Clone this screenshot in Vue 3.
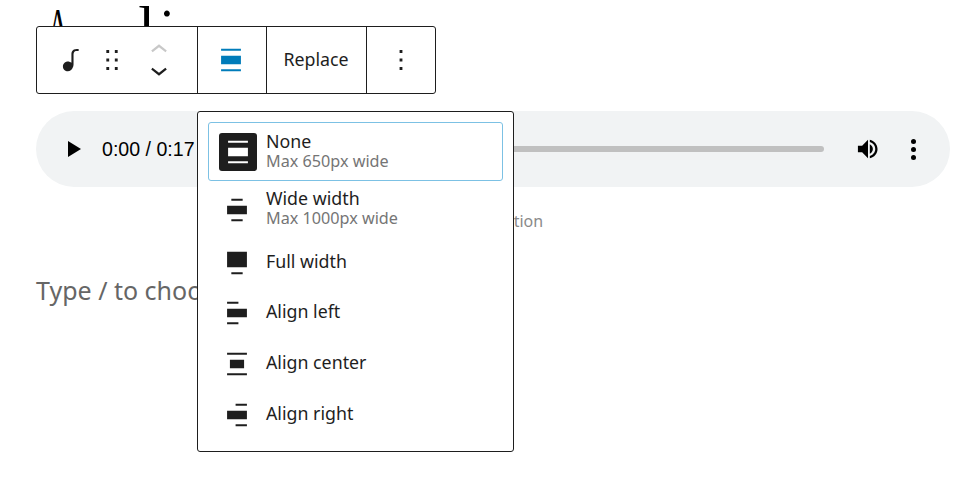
<script setup>
const items = [
  { label: 'None', sub: 'Max 650px wide', cls: 'none', d: 'M19 5.5H5V4h14v1.5ZM19 20H5v-1.5h14V20ZM5 9h14v6H5V9Z', active: true },
  { label: 'Wide width', sub: 'Max 1000px wide', cls: 'wide', d: 'M16 5.5H8V4h8v1.5ZM16 20H8v-1.5h8V20ZM5 9h14v6H5V9Z' },
  { label: 'Full width', cls: 'full', d: 'M5 4h14v11H5V4Zm11 16H8v-1.5h8V20Z' },
  { label: 'Align left', cls: 'std', d: 'M5 5.5h8V4H5v1.5ZM5 20h8v-1.5H5V20ZM19 9H5v6h14V9Z' },
  { label: 'Align center', cls: 'std', d: 'M19 5.5H5V4h14v1.5ZM19 20H5v-1.5h14V20ZM7 9h10v6H7V9Z' },
  { label: 'Align right', cls: 'std', d: 'M19 5.5h-8V4h8v1.5ZM19 20h-8v-1.5h8V20ZM5 9h14v6H5V9Z' },
]
</script>

<template>
  <div class="page">
    <h1 class="title"><span class="t-a">A</span><span class="t-l">l</span><span class="t-c">:</span></h1>
    <div class="player">
      <svg class="play" viewBox="0 0 13 16"><path d="M0 0l13 8-13 8z" /></svg>
      <span class="time">0:00 / 0:17</span>
      <div class="track"></div>
      <svg class="volume" viewBox="0 0 24 24"><path d="M1 8.5v7h4.6L12 22V2L5.600 8.500z" /><path d="M14 6.800c2 1.100 3.300 3 3.300 5.200s-1.300 4.100-3.300 5.200z" /><path d="M14 1.800v2.600c3.400 1 5.900 4 5.900 7.600s-2.500 6.600-5.900 7.600v2.600c4.800-1.100 8.400-5.200 8.400-10.200S18.800 2.900 14 1.800z" /></svg>
      <div class="dots"><i></i><i></i><i></i></div>
    </div>
    <p class="caption">Write caption</p>
    <p class="placeholder">Type / to choose a block</p>

    <div class="toolbar">
      <div class="group first">
        <svg class="icon note" viewBox="0 0 24 24"><path d="M17.700 4.300c-1.200 0-2.800 0-3.800 1-.6.6-.9 1.500-.9 2.600V14c-.6-.6-1.500-1-2.500-1C8.600 13 7 14.600 7 16.500S8.600 20 10.500 20c1.500 0 2.800-1 3.300-2.300.5-.8.700-1.600.7-2.500V7.900c0-.7.200-1.200.5-1.600.6-.6 1.800-.6 2.800-.6h.3V4.300h-.4z" /></svg>
        <svg class="icon drag" viewBox="0 0 24 24"><path d="M8 7h2V5H8v2zm0 6h2v-2H8v2zm0 6h2v-2H8v2zm6-14v2h2V5h-2zm0 8h2v-2h-2v2zm0 6h2v-2h-2v2z" /></svg>
        <div class="movers">
          <svg class="chev up" viewBox="0 0 24 24"><path d="M6.500 12.400L12 8l5.500 4.400-.9 1.200L12 10l-4.500 3.600-1-1.200z" /></svg>
          <svg class="chev" viewBox="0 0 24 24"><path d="M17.500 11.600L12 16l-5.500-4.400.9-1.200L12 14l4.500-3.600 1 1.200z" /></svg>
        </div>
      </div>
      <div class="group align">
        <svg class="icon blue" viewBox="0 0 24 24"><path d="M19 5.500H5V4h14v1.500ZM19 20H5v-1.500h14V20ZM5 9h14v6H5V9Z" /></svg>
      </div>
      <div class="group replace"><span>Replace</span></div>
      <div class="group more">
        <svg class="icon" viewBox="0 0 24 24"><path d="M13 19h-2v-2h2v2zm0-6h-2v-2h2v2zm0-6h-2V5h2v2z" /></svg>
      </div>
    </div>

    <div class="popover">
      <div v-for="item in items" :key="item.label" class="row" :class="[item.cls, { active: item.active }]">
        <span class="icon-box">
          <svg class="icon" viewBox="0 0 24 24"><path :d="item.d" /></svg>
        </span>
        <span class="text">
          <span class="label">{{ item.label }}</span>
          <span v-if="item.sub" class="sub">{{ item.sub }}</span>
        </span>
      </div>
    </div>
  </div>
</template>

<style>
html, body { margin: 0; background: #fff; }
</style>

<style scoped>
.page {
  position: relative;
  width: 980px;
  height: 490px;
  overflow: hidden;
  box-sizing: border-box;
  padding: 0 30px 0 36px;
  background: #fff;
  font-family: "Noto Sans", sans-serif;
  color: #1e1e1e;
}
.title {
  display: flex;
  align-items: flex-start;
  margin: 0;
  height: 111px;
  font-family: "Liberation Serif", serif;
  font-weight: 400;
  line-height: 1;
  color: #000;
}
.t-a { display: inline-block; margin: 1px 0 0 3px; font-size: 53px; transform: scaleX(.55); }
.t-l { margin: -3px 0 0 61px; font-size: 60px; }
.t-c { margin: -8px 0 0 5px; font-size: 50px; }
.player {
  display: flex;
  align-items: center;
  height: 76px;
  padding: 0 34px 0 32px;
  border-radius: 38px;
  background: #f1f3f4;
  color: #000;
}
.play { width: 13px; height: 16px; fill: #000; }
.time { margin-left: 21px; font: 19.6px "Liberation Sans", sans-serif; white-space: nowrap; }
.track { flex: 1; height: 6px; margin: 0 33px 0 20px; border-radius: 3px; background: #c0c0c0; }
.volume { width: 22px; height: 22px; margin-right: 32px; fill: #000; }
.dots { display: flex; flex-direction: column; gap: 3px; }
.dots i { width: 5px; height: 5px; border-radius: 50%; background: #000; }
.caption {
  margin: 22px 0 0;
  font-size: 16px;
  line-height: 24px;
  text-align: center;
  color: #8a8a8a;
}
.placeholder {
  margin: 39px 0 0;
  font-size: 25px;
  line-height: 36px;
  color: #666;
}
.toolbar {
  position: absolute;
  left: 36px;
  top: 26px;
  display: flex;
  height: 68px;
  box-sizing: border-box;
  border: 1px solid #1e1e1e;
  border-radius: 3px;
  background: #fff;
}
.group { display: flex; align-items: center; justify-content: center; box-sizing: border-box; border-right: 1px solid #1e1e1e; }
.group:last-child { border-right: 0; }
.first { width: 161px; justify-content: flex-start; padding-left: 16px; }
.align { width: 69px; padding-right: 2px; }
.replace { width: 100px; font-size: 17.8px; padding-right: 1px; }
.replace span { margin-bottom: 2px; }
.more { width: 68px; }
.icon { width: 34px; height: 34px; fill: currentColor; display: block; flex: none; }
.note { margin-top: -1px; }
.drag { margin-left: 8px; }
.movers { display: flex; flex-direction: column; margin-left: 13px; }
.chev { width: 34px; height: 34px; margin: -7px 0; display: block; fill: #1e1e1e; }
.chev.up { fill: #c8c8c8; }
.blue { fill: #007cba; }
.popover {
  position: absolute;
  left: 197px;
  top: 111px;
  width: 317px;
  height: 341px;
  box-sizing: border-box;
  padding: 10px 10px 0;
  border: 1px solid #1e1e1e;
  border-radius: 3px;
  background: #fff;
}
.row {
  display: flex;
  align-items: center;
  box-sizing: border-box;
  width: 295px;
  height: 51px;
  padding-left: 10px;
  border: 1px solid transparent;
  border-radius: 3px;
}
.none { height: 59px; }
.wide { height: 57px; }
.full { height: 49px; }
.active { border-color: #7cc1e4; }
.icon-box {
  display: flex;
  align-items: center;
  justify-content: center;
  width: 38px;
  height: 38px;
  margin-right: 9px;
  padding-right: 2px;
  box-sizing: border-box;
  border-radius: 3px;
}
.active .icon-box { background: #1e1e1e; color: #fff; padding-right: 0; }
.text { display: flex; flex-direction: column; margin-bottom: 3px; }
.none .text { margin-bottom: 0; }
.wide .text { margin-bottom: 2px; }
.label { font-size: 17.8px; line-height: 20px; }
.sub { font-size: 16.2px; line-height: 21px; color: #757575; }
</style>
